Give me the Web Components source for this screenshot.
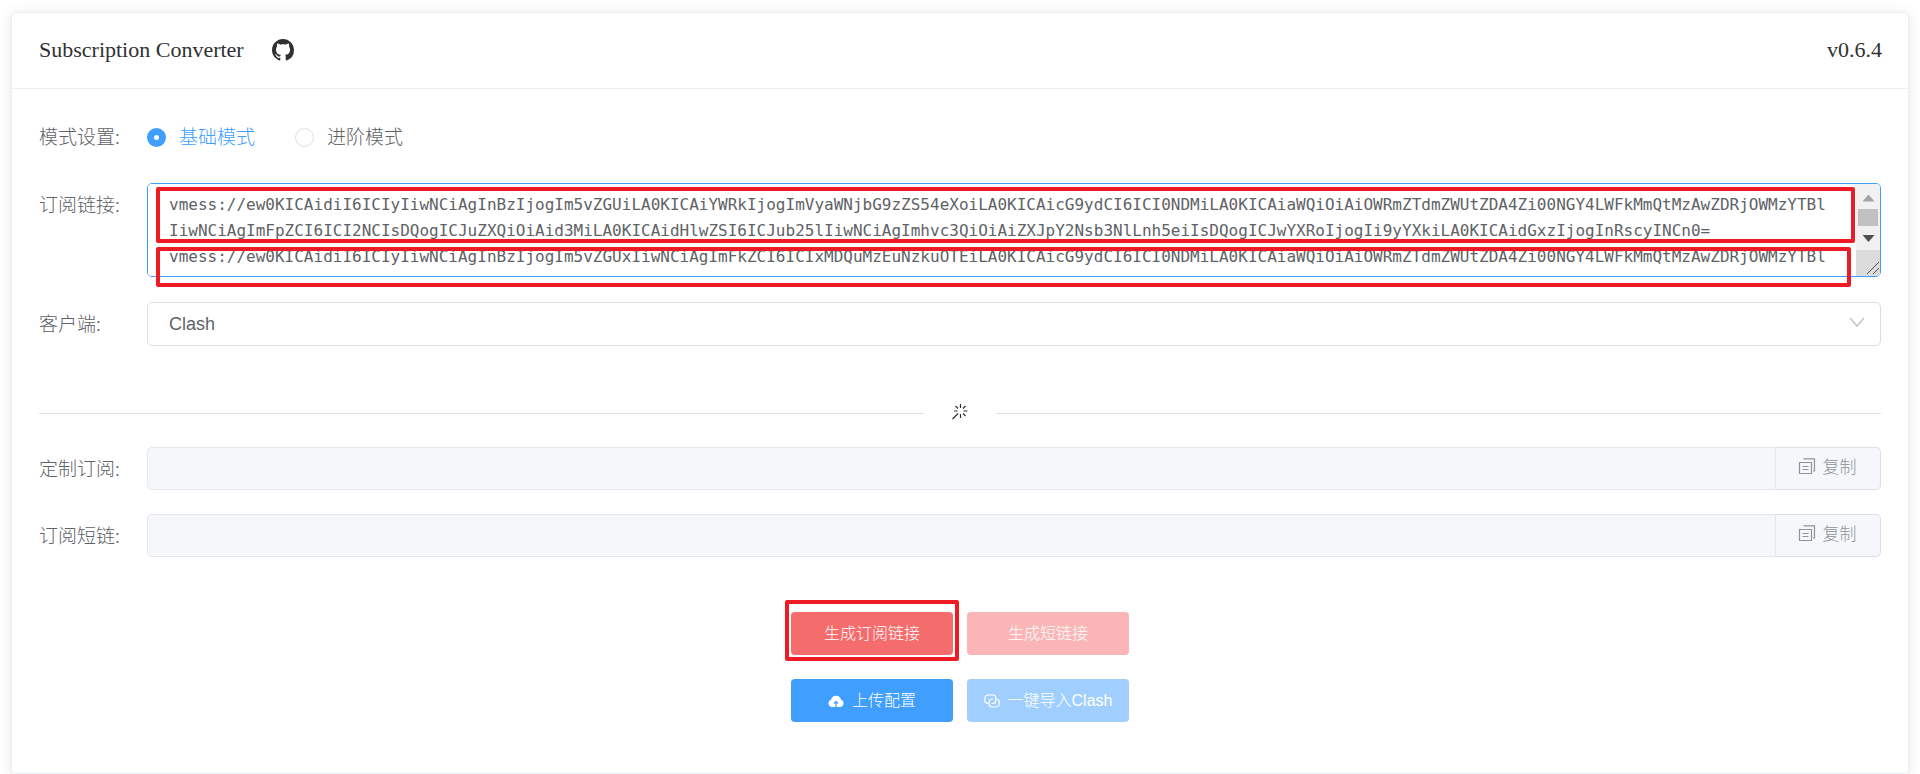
<!DOCTYPE html>
<html lang="zh-CN">
<head>
<meta charset="utf-8">
<meta name="viewport" content="width=device-width, initial-scale=1">
<title>Subscription Converter</title>
<style>
  body {
    margin: 0;
    padding: 12px 11px 0;
    background: #fff;
    color: #303133;
    font-family: "Liberation Serif", "Noto Sans CJK SC", serif;
    --ui-font: "Liberation Sans", "Noto Sans CJK SC", sans-serif;
    --cjk-font: "Noto Sans CJK SC", sans-serif;
    --primary: #409eff;
    --text: #606266;
    --line: #dcdfe6;
    --mark: #ed1c24;
  }
</style>
</head>
<body>
<converter-app></converter-app>

<script>
const define = (name, html, setup) => {
  const template = document.createElement("template");
  template.innerHTML = html;
  customElements.define(name, class extends HTMLElement {
    constructor() {
      super();
      this.attachShadow({ mode: "open" }).append(template.content.cloneNode(true));
    }
    connectedCallback() {
      if (setup) setup(this, this.shadowRoot);
    }
  });
};

const LINKS = [
  "vmess://ew0KICAidiI6ICIyIiwNCiAgInBzIjogIm5vZGUiLA0KICAiYWRkIjogImVyaWNjbG9zZS54eXoiLA0KICAicG9ydCI6ICI0NDMiLA0KICAiaWQiOiAiOWRmZTdmZWUtZDA4Zi00NGY4LWFkMmQtMzAwZDRjOWMzYTBlIiwNCiAgImFpZCI6ICI2NCIsDQogICJuZXQiOiAid3MiLA0KICAidHlwZSI6ICJub25lIiwNCiAgImhvc3QiOiAiZXJpY2Nsb3NlLnh5eiIsDQogICJwYXRoIjogIi9yYXkiLA0KICAidGxzIjogInRscyINCn0=",
  "vmess://ew0KICAidiI6ICIyIiwNCiAgInBzIjogIm5vZGUxIiwNCiAgImFkZCI6ICIxMDQuMzEuNzkuOTEiLA0KICAicG9ydCI6ICI0NDMiLA0KICAiaWQiOiAiOWRmZTdmZWUtZDA4Zi00NGY4LWFkMmQtMzAwZDRjOWMzYTBlIiwNCiAgImFpZCI6ICI2NCIsDQogICJuZXQiOiAid3MiLA0KICAidHlwZSI6ICJub25lIiwNCiAgImhvc3QiOiAiZXJpY2Nsb3NlLnh5eiIsDQogICJwYXRoIjogIi9yYXkiLA0KICAidGxzIjogInRscyINCn0="
].join("\n");

/* Rules shared by every labelled form row. */
const ROW_CSS = `
  :host { display: flex; align-items: flex-start; font-family: var(--cjk-font); font-weight: 300; color: var(--text); }
  * { box-sizing: border-box; }
  .name { flex: 0 0 108px; font-size: 19px; line-height: 42px; white-space: nowrap; }
  .field { flex: 1; min-width: 0; position: relative; }
`;

/* Red outline laid over the content it points at. */
define("red-mark", `
  <style>
    :host { display: block; position: absolute; box-sizing: border-box; border: 4px solid var(--mark); border-radius: 2px; pointer-events: none; }
  </style>`);

define("panel-card", `
  <style>
    :host { display: block; background: #fff; border: 1px solid #ebeef5; border-radius: 5px; box-shadow: 0 3px 16px rgba(0, 0, 0, .1); }
    header { display: flex; align-items: center; justify-content: space-between; box-sizing: border-box; height: 76px; padding: 0 26px 2px 27px; border-bottom: 1px solid #ebeef5; }
    .body { padding: 26px 27px 51px; }
  </style>
  <header><slot name="title"></slot><slot name="version"></slot></header>
  <div class="body"><slot></slot></div>`);

define("app-title", `
  <style>
    :host { display: flex; align-items: center; gap: 28px; font-size: 22px; line-height: 26px; }
    a { display: block; color: inherit; }
    svg { display: block; width: 22px; height: 22px; }
  </style>
  <span><slot></slot></span>
  <a href="#" aria-label="GitHub">
    <svg viewBox="0 0 16 16" fill="currentColor"><path d="M8 0C3.58 0 0 3.58 0 8c0 3.54 2.29 6.53 5.47 7.59.4.07.55-.17.55-.38 0-.19-.01-.82-.01-1.49-2.01.37-2.53-.49-2.69-.94-.09-.23-.48-.94-.82-1.13-.28-.15-.68-.52-.01-.53.63-.01 1.08.58 1.23.82.72 1.21 1.87.87 2.33.66.07-.52.28-.87.51-1.07-1.78-.2-3.64-.89-3.64-3.95 0-.87.31-1.59.82-2.15-.08-.2-.36-1.02.08-2.12 0 0 .67-.21 2.2.82.64-.18 1.32-.27 2-.27s1.36.09 2 .27c1.53-1.04 2.2-.82 2.2-.82.44 1.1.16 1.92.08 2.12.51.56.82 1.27.82 2.15 0 3.07-1.87 3.75-3.65 3.95.29.25.54.73.54 1.48 0 1.07-.01 1.93-.01 2.2 0 .21.15.46.55.38A8.01 8.01 0 0 0 16 8c0-4.42-3.58-8-8-8z"/></svg>
  </a>`);

define("app-version", `
  <style>:host { display: block; font-size: 22px; line-height: 26px; }</style>
  <slot></slot>`);

define("mode-row", `
  <style>
    ${ROW_CSS}
    :host { padding-bottom: 2px; }
    .field { display: flex; gap: 40px; }
    label { display: flex; align-items: center; gap: 13px; font-size: 19px; line-height: 42px; }
    label:has(:checked) { color: var(--primary); }
    input { appearance: none; width: 19px; height: 19px; margin: 2px 0 0; border: 1px solid var(--line); border-radius: 50%; background: #fff; }
    input:checked { border: 7px solid var(--primary); }
  </style>
  <span class="name" id="name">模式设置:</span>
  <div class="field" role="radiogroup" aria-labelledby="name">
    <label><input type="radio" name="mode" checked>基础模式</label>
    <label><input type="radio" name="mode">进阶模式</label>
  </div>`);

define("scroll-rail", `
  <style>
    :host { display: flex; flex-direction: column; width: 24px; background: #f1f1f1; }
    svg { display: block; width: 24px; }
    .thumb { height: 17px; margin: 0 2px; background: #c1c1c1; }
    .grip { margin-top: auto; background: #dcdcdc; }
  </style>
  <svg height="25" viewBox="0 0 24 25"><path d="M6.500 17.500 12.500 10.500 18.500 17.500z" fill="#a3a3a3"/></svg>
  <div class="thumb"></div>
  <svg height="24" viewBox="0 0 24 24"><path d="M6.500 9 18.500 9 12.500 16z" fill="#505050"/></svg>
  <svg class="grip" height="26" viewBox="0 0 24 26"><path d="M11 24 23 12M17 24 23 18" stroke="#505050" stroke-width="1" fill="none"/></svg>`);

define("links-row", `
  <style>
    ${ROW_CSS}
    :host { padding-bottom: 1px; }
    .box { display: flex; height: 94px; border: 1px solid var(--primary); border-radius: 5px; overflow: hidden; }
    textarea { flex: 1; min-width: 0; margin: 0; padding: 8px 22px 0 21px; border: 0; outline: 0; resize: none; overflow: hidden; background: #fff; color: var(--text); font: 16px/26px "DejaVu Sans Mono", monospace; word-break: break-all; }
    .first { top: 4px; left: 9px; right: 26px; height: 56px; }
    .second { top: 64px; left: 9px; right: 30px; height: 40px; }
  </style>
  <label class="name" for="links">订阅链接:</label>
  <div class="field">
    <div class="box"><textarea id="links" spellcheck="false"></textarea><scroll-rail aria-hidden="true"></scroll-rail></div>
    <red-mark class="first"></red-mark>
    <red-mark class="second"></red-mark>
  </div>`,
  (host, root) => { root.getElementById("links").value = LINKS; });

define("client-row", `
  <style>
    ${ROW_CSS}
    select { appearance: none; display: block; width: 100%; height: 44px; padding: 0 42px 0 21px; border: 1px solid var(--line); border-radius: 5px; background: #fff; color: var(--text); font: 18px/24px var(--ui-font); }
    svg { position: absolute; right: 16px; top: 13px; width: 16px; height: 16px; pointer-events: none; }
  </style>
  <label class="name" for="client">客户端:</label>
  <div class="field">
    <select id="client"><option>Clash</option></select>
    <svg viewBox="0 0 16 16" fill="none" stroke="#c0c4cc" stroke-width="1.500" stroke-linecap="round"><path d="M1.500 3.500 8 11 14.500 3.500"/></svg>
  </div>`);

define("icon-divider", `
  <style>
    :host { display: flex; align-items: center; gap: 26px; height: 20px; color: #303133; }
    :host::before, :host::after { content: ""; flex: 1; height: 1px; background: var(--line); }
    svg { display: block; width: 20px; height: 20px; }
  </style>
  <svg viewBox="0 0 20 20" fill="none" stroke="currentColor" stroke-width="1.200"><path d="M10.500 1v4M10.500 11v4M4 8h3.500M13.500 8h4M5.500 3l2.500 2.500M13 10.500l2.500 2.500M15.500 3l-2.500 2.500M8 10.500l-5.500 5.500"/></svg>`);

define("result-row", `
  <style>
    ${ROW_CSS}
    .field { display: flex; }
    input { flex: 1; min-width: 0; height: 43px; padding: 0 20px; border: 1px solid #e4e7ed; border-right: 0; border-radius: 5px 0 0 5px; background: #f5f7fa; font: 18px/24px var(--ui-font); }
    button { display: flex; align-items: center; justify-content: center; gap: 7px; width: 106px; height: 43px; padding: 0 2px 6px 0; border: 1px solid var(--line); border-left-color: #e4e7ed; border-radius: 0 5px 5px 0; background: #f5f7fa; color: #909399; font: 300 17px/24px var(--cjk-font); }
    svg { width: 18px; height: 18px; }
  </style>
  <label class="name" for="result"></label>
  <div class="field">
    <input id="result" type="text" disabled>
    <button type="button"><svg viewBox="0 0 18 18" fill="none" stroke="currentColor" stroke-width="1.200"><path d="M1.500 5.500h12v11h-12zM5.500 1.800h11v12.200h-1.500M4.500 9.500h6M4.500 12.500h6"/></svg>复制</button>
  </div>`,
  (host, root) => { root.querySelector("label").textContent = host.getAttribute("label"); });

define("action-button", `
  <style>
    :host { display: block; position: relative; }
    button { display: flex; align-items: center; justify-content: center; gap: 8px; width: 162px; height: 43px; padding: 0; border: 0; border-radius: 4px; background: var(--fill); color: #fff; font: 300 16px/24px var(--ui-font); white-space: nowrap; }
    ::slotted(svg) { display: block; width: 16px; height: 16px; }
  </style>
  <button type="button"><slot name="icon"></slot><span><slot></slot></span></button>
  <slot name="mark"></slot>`,
  (host, root) => { root.querySelector("button").disabled = host.hasAttribute("disabled"); });

define("action-grid", `
  <style>
    :host { display: grid; grid-template-columns: auto auto; justify-content: center; gap: 24px 14px; }
    .danger { --fill: #f56c6c; }
    .danger[disabled] { --fill: #fab6b6; }
    .primary { --fill: #409eff; }
    .primary[disabled] { --fill: #a0cfff; }
    red-mark { top: -12px; bottom: -6px; left: -6px; right: -6px; }
  </style>
  <action-button class="danger">生成订阅链接<red-mark slot="mark"></red-mark></action-button>
  <action-button class="danger" disabled>生成短链接</action-button>
  <action-button class="primary"><svg slot="icon" viewBox="0 0 16 16"><path d="M4 14a3.700 3.700 0 0 1-1-7.200 5.200 5.200 0 0 1 10.100 0A3.700 3.700 0 0 1 12 14z" fill="#fff"/><path d="M8 14V9M6 10.500l2-2 2 2" stroke="#409eff" stroke-width="1.200" fill="none"/></svg>上传配置</action-button>
  <action-button class="primary" disabled><svg slot="icon" viewBox="0 0 16 16" fill="none" stroke="#fff" stroke-width="1.200"><path d="M4.500 10.500H3.800A3 3 0 0 1 .8 7.500V5a3 3 0 0 1 3-3h5a3 3 0 0 1 3 3v2.500a3 3 0 0 1-3 3H7.500"/><path d="M12 6h.2a3 3 0 0 1 3 3v2a3 3 0 0 1-3 3H8a3 3 0 0 1-3-3V9a3 3 0 0 1 3-3h1"/></svg>一键导入Clash</action-button>`);

define("converter-app", `
  <style>
    :host { display: block; }
    form { display: flex; flex-direction: column; gap: 24px; }
    icon-divider { margin: 33px 0 0; }
    action-grid { margin-top: 31px; }
  </style>
  <panel-card>
    <app-title slot="title">Subscription Converter</app-title>
    <app-version slot="version">v0.6.4</app-version>
    <form>
      <mode-row></mode-row>
      <links-row></links-row>
      <client-row></client-row>
      <icon-divider></icon-divider>
      <result-row label="定制订阅:"></result-row>
      <result-row label="订阅短链:"></result-row>
      <action-grid></action-grid>
    </form>
  </panel-card>`);
</script>
</body>
</html>
